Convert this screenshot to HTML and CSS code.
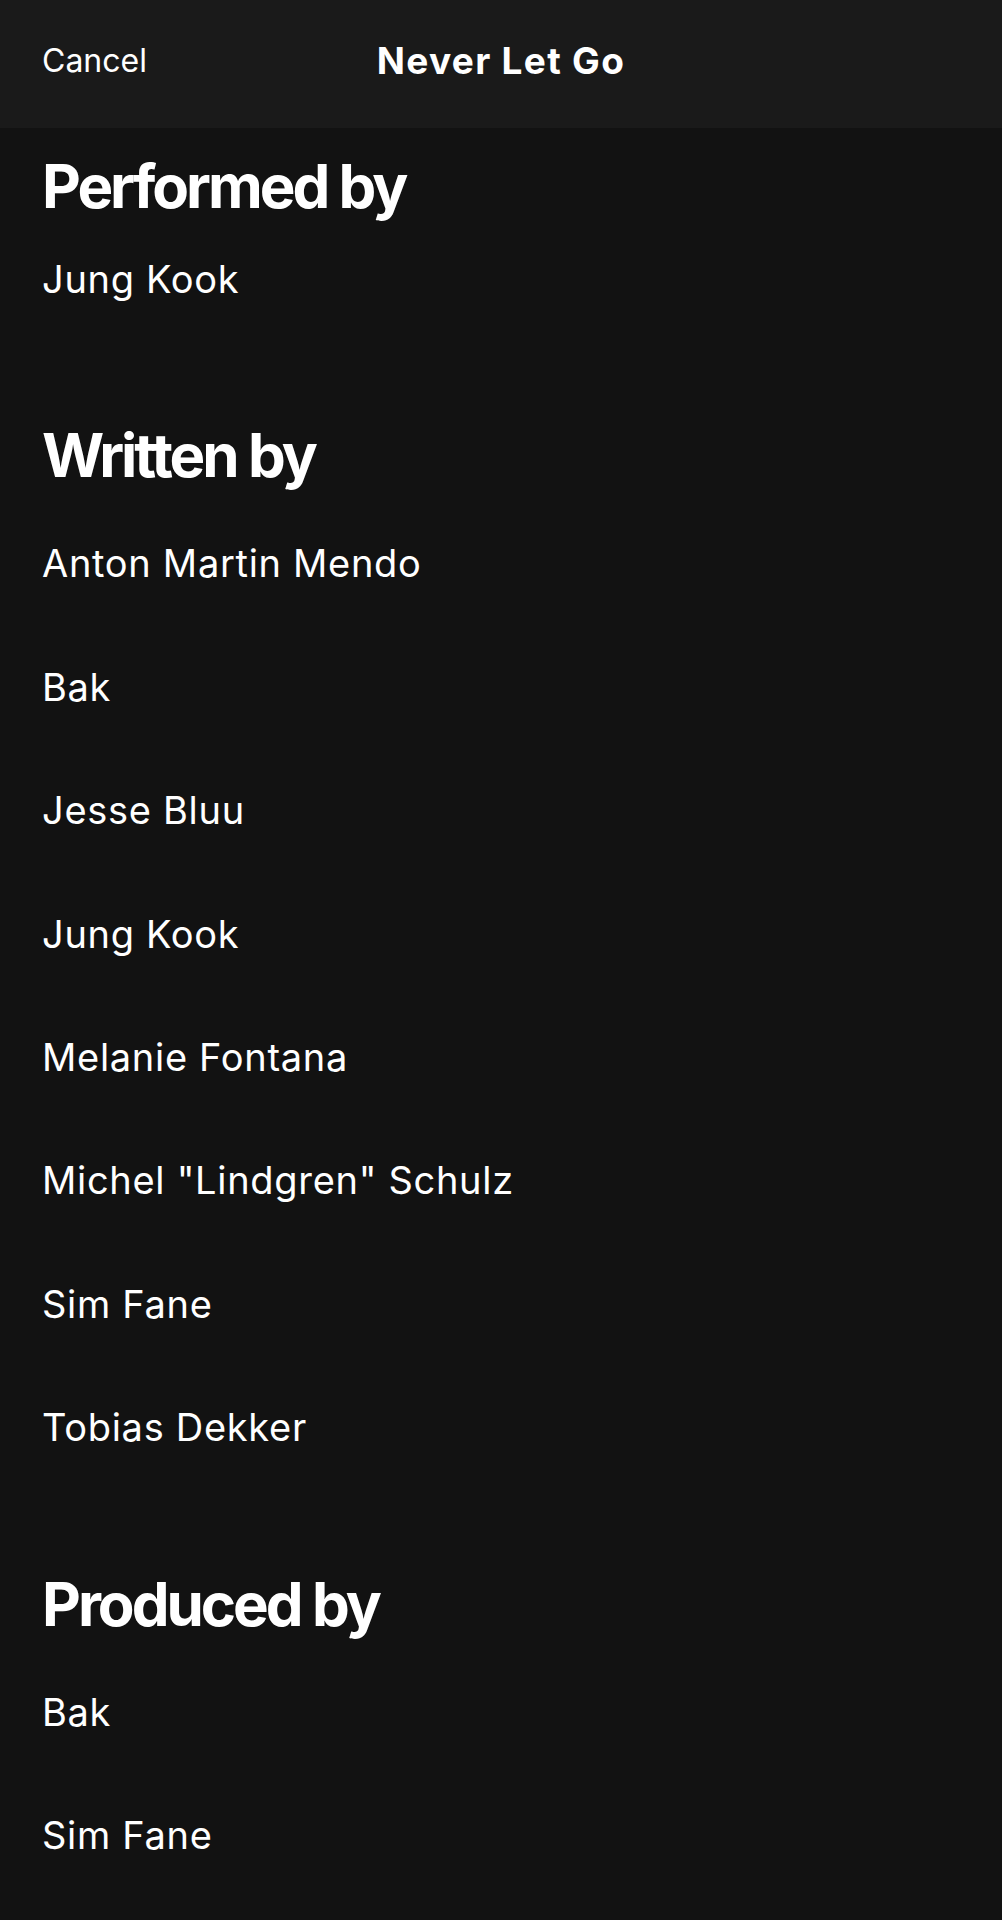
FILE: index.html
```html
<!DOCTYPE html>
<html lang="en">
  <head>
    <title>Never Let Go - Credits</title>
    <meta name="viewport" content="width=device-width, initial-scale=1.0">
    <link rel="stylesheet" href="styles.css">
  </head>
  <body>
    <div class="topbar">
      <span class="cancel">Cancel</span>
      <h1 class="song-title">Never Let Go</h1>
      <span></span>
    </div>
    <div class="credits">
      <div class="credit-block first">
        <h2 class="credit-title">Performed by</h2>
        <ul class="credit-list">
          <li>Jung Kook</li>
        </ul>
      </div>
      <div class="credit-block">
        <h2 class="credit-title">Written by</h2>
        <ul class="credit-list">
          <li>Anton Martin Mendo</li>
          <li>Bak</li>
          <li>Jesse Bluu</li>
          <li>Jung Kook</li>
          <li>Melanie Fontana</li>
          <li>Michel "Lindgren" Schulz</li>
          <li>Sim Fane</li>
          <li>Tobias Dekker</li>
        </ul>
      </div>
      <div class="credit-block">
        <h2 class="credit-title">Produced by</h2>
        <ul class="credit-list">
          <li>Bak</li>
          <li>Sim Fane</li>
        </ul>
      </div>
    </div>
  </body>
</html>
```

FILE: styles.css
```css
body {
  margin: 0;
  background-color: #121212;
  color: #fff;
  font-family: "Inter", "Liberation Sans", sans-serif;
}
.topbar {
  height: 128px;
  box-sizing: border-box;
  padding: 0 42px 8px;
  display: grid;
  grid-template-columns: 1fr auto 1fr;
  align-items: center;
  background-color: #1a1a1a;
}
.cancel {
  font-size: 32px;
}
.song-title {
  margin: 0;
  font-size: 37px;
  font-weight: 700;
  letter-spacing: 1.3px;
}
.credits {
  padding: 22px 42px 0;
}
.credit-block {
  margin-bottom: 78px;
}
.credit-title {
  margin: 0 0 11px;
  font-size: 60px;
  line-height: 72px;
  font-weight: 700;
  letter-spacing: -3px;
}
.credit-block.first .credit-title {
  margin-bottom: -4px;
}
.credit-list {
  list-style-type: none;
  margin: 0;
  padding: 0;
}
.credit-list li {
  font-size: 38px;
  line-height: 123.4px;
  letter-spacing: 0.7px;
}
```
